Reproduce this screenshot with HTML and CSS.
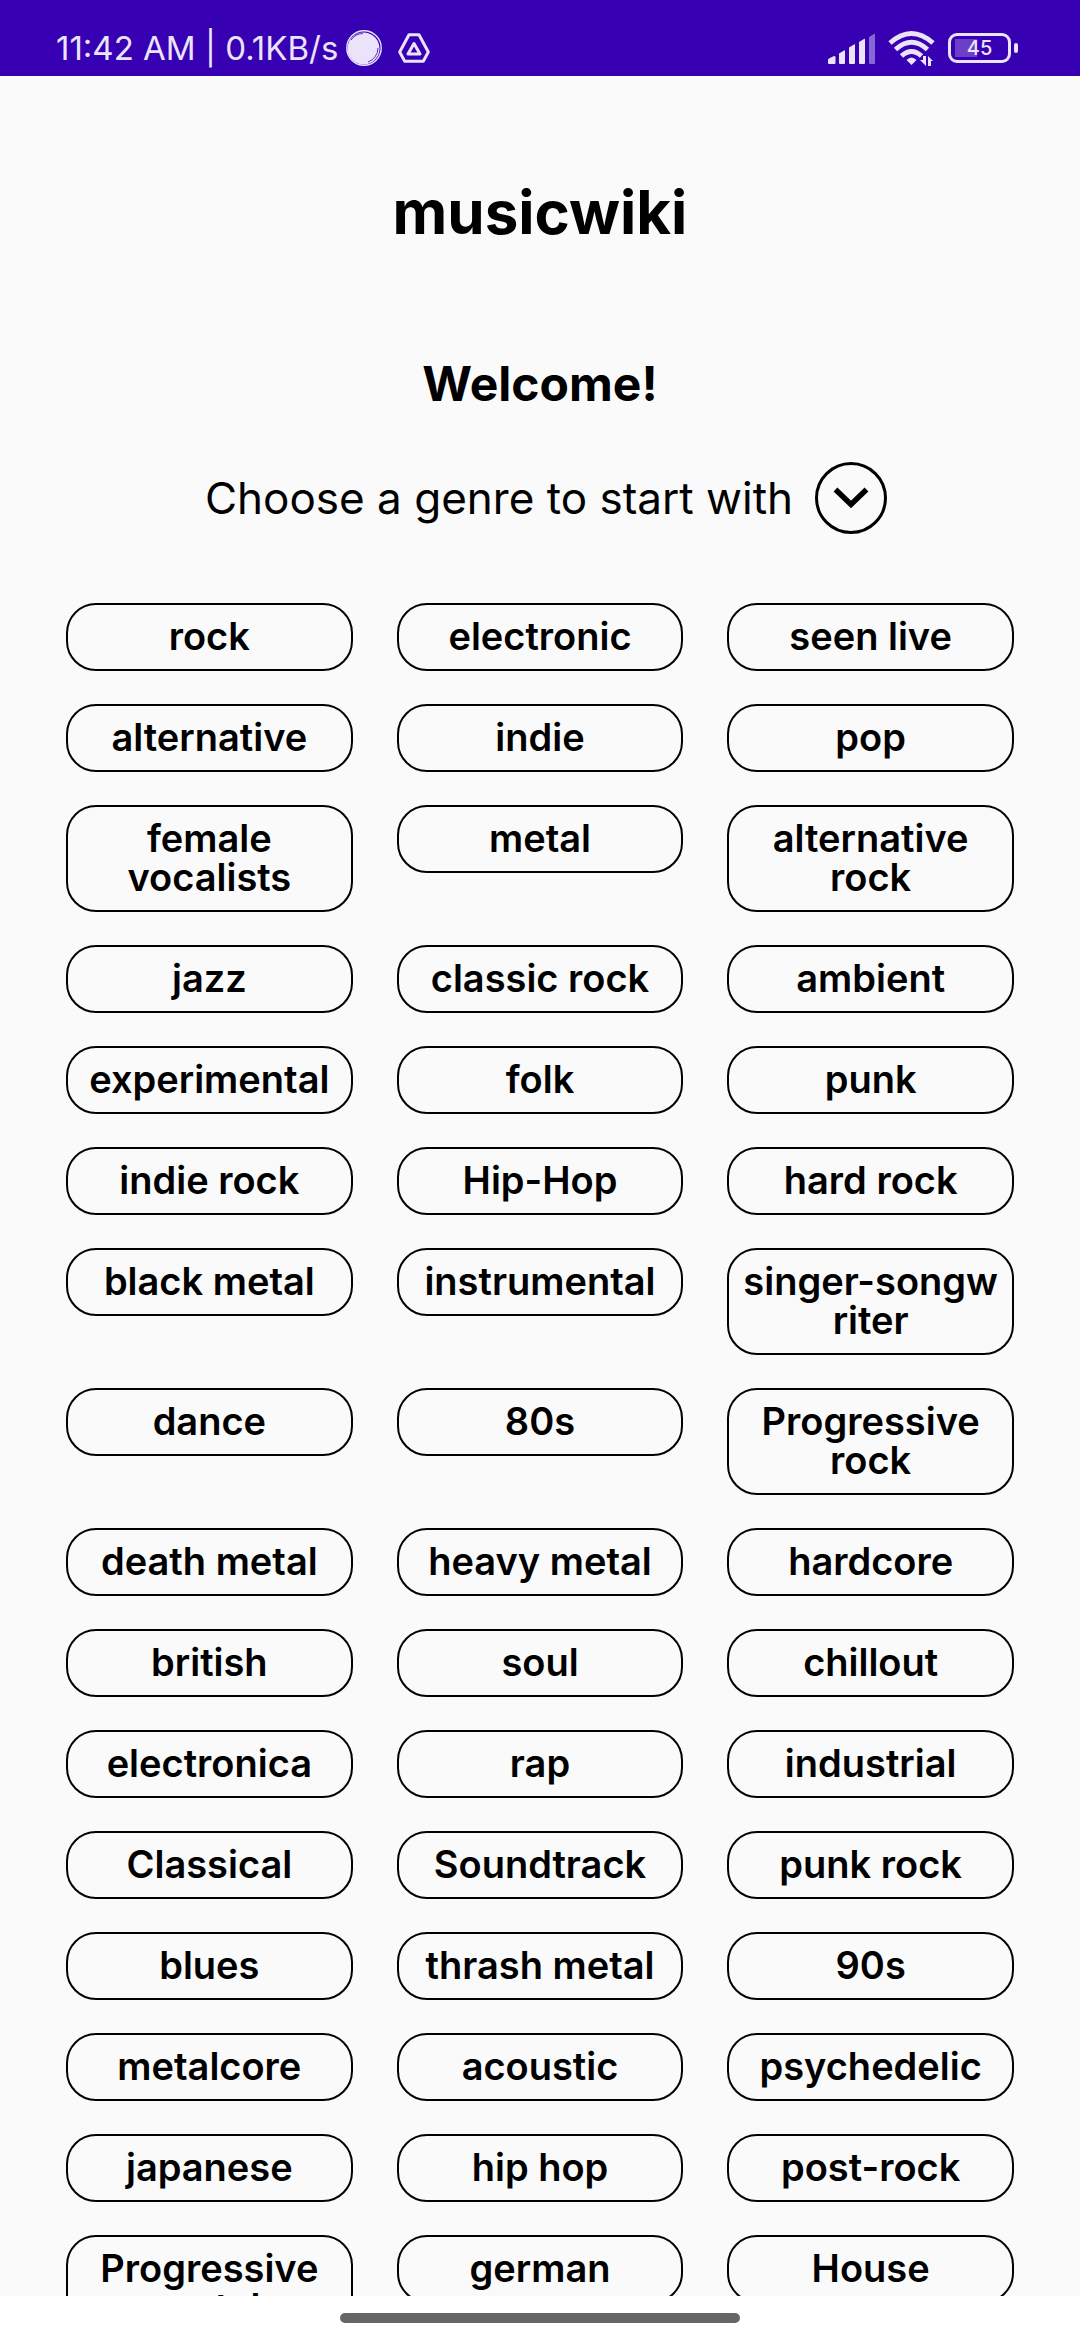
FILE: index.html
```html
<!DOCTYPE html>
<html lang="en">
<head>
<meta charset="utf-8">
<meta name="viewport" content="width=device-width, initial-scale=1">
<title>musicwiki</title>
<link rel="stylesheet" href="styles.css">
</head>
<body>
<header class="status">
  <div class="status-left">
    <span class="status-text">11:42 AM | 0.1KB/s</span>
    <svg class="icon-dot" width="36" height="36" viewBox="0 0 36 36" aria-hidden="true">
      <circle cx="18" cy="18" r="17.2" fill="none" stroke="#ebe3fa" stroke-width="1.4"/>
      <circle cx="17.500" cy="18.500" r="16" fill="#ebe3fa"/>
      <path d="M5 10A15 15 0 0 1 17 3.500M32 18A15 15 0 0 1 22 32" fill="none" stroke="#3700b3" stroke-width=".8"/>
    </svg>
    <svg class="icon-drive" width="32" height="30" viewBox="0 0 32 30" aria-hidden="true">
      <g fill="none" stroke="#ebe3fa" stroke-width="3" stroke-linejoin="round">
        <path d="M11 1.700h10L30.300 19l-5 9.300H6.700L1.700 19z"/>
        <path d="M16 10.500l6 10.500H10z"/>
      </g>
    </svg>
  </div>
  <div class="status-right">
    <svg width="48" height="32" viewBox="0 0 48 32" aria-hidden="true">
      <g fill="#ebe3fa">
        <path d="M0 28q0-1 1-1.500l5-2.500q1.500 0 1.500 1v6q0 1-1 1H1q-1 0-1-1z"/>
        <path d="M11 21.500l5-3q1-.5 1 .5v12q0 1-1 1h-4q-1 0-1-1z"/>
        <path d="M21 15.500l5-3q1-.5 1 .5v18q0 1-1 1h-4q-1 0-1-1z"/>
        <path d="M31 10l5-3q1-.5 1 .5V31q0 1-1 1h-4q-1 0-1-1z"/>
        <path opacity=".45" d="M41 5l5-3q1-.5 1 .5V31q0 1-1 1h-4q-1 0-1-1z"/>
      </g>
    </svg>
    <svg width="48" height="36" viewBox="0 0 48 36" aria-hidden="true">
      <g fill="none" stroke="#ebe3fa" stroke-width="5">
        <path d="M2 13Q23.500-6 45 13"/>
        <path d="M7.500 19.500Q23.500 5 39.500 19.500"/>
        <path d="M13.500 26Q23.500 17 33.500 26"/>
      </g>
      <path d="M23.500 35l-5-5q5-5 10 0z" fill="#ebe3fa"/>
      <path d="M32 30h3v-4h3v10zM40 36V26l5 5h-2v5z" fill="#ebe3fa"/>
    </svg>
    <div class="battery">
      <span class="battery-body"><span class="battery-text">45</span></span>
      <span class="battery-tip"></span>
    </div>
  </div>
</header>
<main class="screen">
  <h1 class="title">musicwiki</h1>
  <h2 class="welcome">Welcome!</h2>
  <div class="prompt">
    <span id="prompt-text">Choose a genre to start with</span>
    <button class="expand" type="button" aria-labelledby="prompt-text">
      <svg width="36" height="24" viewBox="0 0 36 24" aria-hidden="true"><path d="M2.500 3.500L18 18.500 33.500 3.500" fill="none" stroke="#000" stroke-width="5.500"/></svg>
    </button>
  </div>
  <div class="genres">
    <button class="genre" type="button">rock</button>
    <button class="genre" type="button">electronic</button>
    <button class="genre" type="button">seen live</button>
    <button class="genre" type="button">alternative</button>
    <button class="genre" type="button">indie</button>
    <button class="genre" type="button">pop</button>
    <button class="genre" type="button">female vocalists</button>
    <button class="genre" type="button">metal</button>
    <button class="genre" type="button">alternative rock</button>
    <button class="genre" type="button">jazz</button>
    <button class="genre" type="button">classic rock</button>
    <button class="genre" type="button">ambient</button>
    <button class="genre" type="button">experimental</button>
    <button class="genre" type="button">folk</button>
    <button class="genre" type="button">punk</button>
    <button class="genre" type="button">indie rock</button>
    <button class="genre" type="button">Hip-Hop</button>
    <button class="genre" type="button">hard rock</button>
    <button class="genre" type="button">black metal</button>
    <button class="genre" type="button">instrumental</button>
    <button class="genre" type="button">singer-songw<wbr>riter</button>
    <button class="genre" type="button">dance</button>
    <button class="genre" type="button">80s</button>
    <button class="genre" type="button">Progressive rock</button>
    <button class="genre" type="button">death metal</button>
    <button class="genre" type="button">heavy metal</button>
    <button class="genre" type="button">hardcore</button>
    <button class="genre" type="button">british</button>
    <button class="genre" type="button">soul</button>
    <button class="genre" type="button">chillout</button>
    <button class="genre" type="button">electronica</button>
    <button class="genre" type="button">rap</button>
    <button class="genre" type="button">industrial</button>
    <button class="genre" type="button">Classical</button>
    <button class="genre" type="button">Soundtrack</button>
    <button class="genre" type="button">punk rock</button>
    <button class="genre" type="button">blues</button>
    <button class="genre" type="button">thrash metal</button>
    <button class="genre" type="button">90s</button>
    <button class="genre" type="button">metalcore</button>
    <button class="genre" type="button">acoustic</button>
    <button class="genre" type="button">psychedelic</button>
    <button class="genre" type="button">japanese</button>
    <button class="genre" type="button">hip hop</button>
    <button class="genre" type="button">post-rock</button>
    <button class="genre" type="button">Progressive metal</button>
    <button class="genre" type="button">german</button>
    <button class="genre" type="button">House</button>
  </div>
</main>
<footer class="navbar"><span class="handle"></span></footer>
</body>
</html>
```
FILE: styles.css
```css
* {
  box-sizing: border-box;
}

body {
  margin: 0;
  height: 100vh;
  display: flex;
  flex-direction: column;
  background: #fafafa;
  color: #000;
  font-family: Inter, "Noto Sans", sans-serif;
}

.status {
  flex: none;
  display: flex;
  justify-content: space-between;
  padding: 28px 62px 8px 56px;
  background: #3700b3;
  color: #ebe3fa;
}

.status-left,
.status-right {
  display: flex;
  align-items: center;
  height: 40px;
}

.status-text {
  font-size: 33px;
  line-height: 40px;
  white-space: nowrap;
}

.icon-dot {
  margin-left: 8px;
}

.icon-drive {
  margin-left: 16px;
}

.status-right {
  gap: 12px;
}

.battery {
  display: flex;
  align-items: center;
  gap: 3px;
}

.battery-body {
  display: flex;
  align-items: center;
  justify-content: center;
  width: 63px;
  height: 30px;
  border: 3px solid #ebe3fa;
  border-radius: 9px;
  background: linear-gradient(#6b3fc6, #6b3fc6) 4px center / 22px 18px no-repeat;
}

.battery-text {
  font-size: 20px;
  line-height: 24px;
  font-weight: 500;
}

.battery-tip {
  width: 4px;
  height: 10px;
  border-radius: 2px;
  background: #ebe3fa;
}

.screen {
  flex: 1;
  min-height: 0;
  overflow: hidden;
  padding: 96px 66px 0;
}

.title {
  margin: 0;
  font-size: 60px;
  line-height: 80px;
  font-weight: 700;
  text-align: center;
}

.welcome {
  margin: 100px 0 0;
  font-size: 48px;
  line-height: 64px;
  font-weight: 700;
  text-align: center;
}

.prompt {
  display: flex;
  align-items: center;
  justify-content: center;
  gap: 22px;
  margin-top: 46px;
  padding-left: 12px;
  font-size: 44px;
  line-height: 56px;
}

.expand {
  flex: none;
  display: flex;
  align-items: center;
  justify-content: center;
  width: 72px;
  height: 72px;
  padding: 0;
  border: 3px solid #000;
  border-radius: 50%;
  background: none;
}

.genres {
  display: grid;
  grid-template-columns: repeat(3, minmax(0, 1fr));
  align-items: start;
  gap: 33px 44px;
  margin-top: 69px;
}

.genre {
  padding: 12px 12px 13px;
  border: 2px solid #000;
  border-radius: 30px;
  background: none;
  color: #000;
  font-family: inherit;
  font-size: 38px;
  line-height: 39px;
  font-weight: 600;
  text-align: center;
}

.navbar {
  flex: none;
  display: flex;
  justify-content: center;
  padding: 17px 0;
  background: #fff;
}

.handle {
  width: 37%;
  height: 10px;
  border-radius: 5px;
  background: #666;
}
```
